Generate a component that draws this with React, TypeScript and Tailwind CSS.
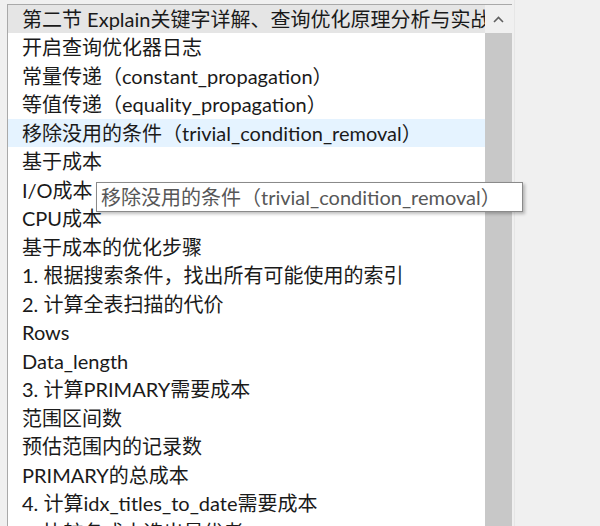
const items = [
  "开启查询优化器日志",
  "常量传递（constant_propagation）",
  "等值传递（equality_propagation）",
  "移除没用的条件（trivial_condition_removal）",
  "基于成本",
  "I/O成本",
  "CPU成本",
  "基于成本的优化步骤",
  "1. 根据搜索条件，找出所有可能使用的索引",
  "2. 计算全表扫描的代价",
  "Rows",
  "Data_length",
  "3. 计算PRIMARY需要成本",
  "范围区间数",
  "预估范围内的记录数",
  "PRIMARY的总成本",
  "4. 计算idx_titles_to_date需要成本",
  "5. 比较各成本选出最优者",
];

const SELECTED = 3;

export default function App() {
  return (
    <div
      className="relative h-[526px] w-[600px] overflow-hidden bg-[#f0f0f0] pl-[7px] pt-[4px] text-[20px] text-[#1a1a1a]"
      style={{ fontFamily: 'Lato, "Noto Sans CJK SC", sans-serif' }}
    >
      <div className="flex h-[600px] w-[505px] border-l border-t border-[#a9a9a9] bg-white">
        <div className="flex min-w-0 flex-1 flex-col">
          <div className="flex h-[28px] shrink-0 items-center overflow-hidden whitespace-nowrap bg-[#e5e5e5] pl-[14px]">
            第二节 Explain关键字详解、查询优化原理分析与实战
          </div>
          {items.map((label, i) => (
            <div
              key={label}
              className={
                i === SELECTED
                  ? "flex h-[28.5px] shrink-0 items-center whitespace-nowrap bg-[#e5f3ff] pl-[14px]"
                  : "flex h-[28.5px] shrink-0 items-center whitespace-nowrap pl-[14px]"
              }
            >
              {label}
            </div>
          ))}
        </div>
        <div className="flex w-[27px] shrink-0 flex-col bg-[#f0f0f0]">
          <div className="flex h-[28px] items-center justify-center bg-[#f0f0f0]">
            <svg width="11" height="7" viewBox="0 0 11 7" fill="none">
              <path d="M1 6 L5.5 1.5 L10 6" stroke="#606060" strokeWidth="1.6" />
            </svg>
          </div>
          <div className="flex-1 bg-[#c8c8c8]" />
        </div>
      </div>
      <div className="absolute left-[514px] top-0 h-full w-px bg-[#e6e6e6]" />

      <div className="absolute left-[96px] top-[182px] flex h-[30px] w-[427px] items-center whitespace-nowrap border border-[#8a8a8a] bg-white pl-[4px] text-[#575757] shadow-[2px_2px_3px_rgba(0,0,0,0.25)]">
        移除没用的条件（trivial_condition_removal）
      </div>
    </div>
  );
}
